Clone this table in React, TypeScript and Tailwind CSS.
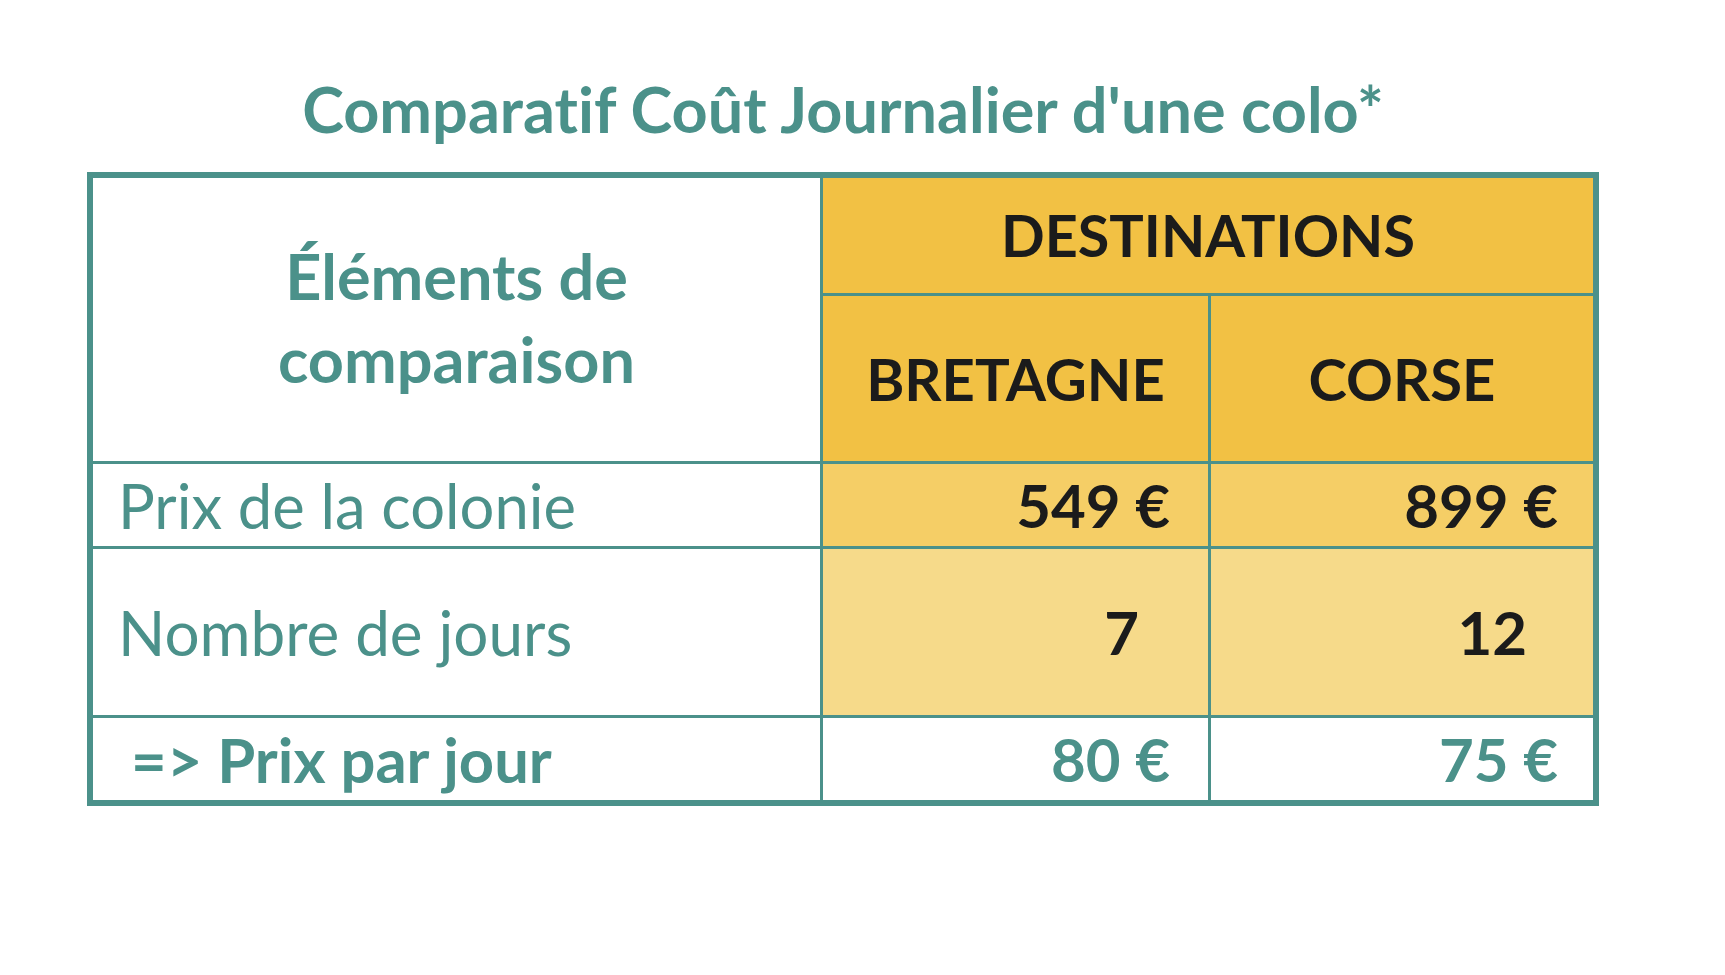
import React from 'react';

const teal = 'text-[#4b918a]';

const App: React.FC = () => {
  return (
    <div className="min-h-screen w-full bg-white font-['Lato',sans-serif] [font-variant-ligatures:none]">
      <div className="ml-[87px] w-fit pt-[73px]">
        {/* Title */}
        <h1 className={`text-center text-[63px] font-bold leading-[72px] ${teal} mb-[27px]`}>
          Comparatif Coût Journalier d'une colo*
        </h1>

        {/* Comparison table */}
        <div className="grid w-fit grid-cols-[727px_385px_382px] grid-rows-[115px_165px_82px_166px_82px] gap-[3px] border-[6px] border-[#4b918a] bg-[#4b918a]">
          <div className={`row-span-2 flex items-center justify-center bg-white pb-[6px] text-center text-[63px] font-bold leading-[83px] ${teal}`}>
            <span>
              Éléments de
              <br />
              comparaison
            </span>
          </div>
          <div className="col-span-2 flex items-center justify-center bg-[#f2c144] text-[57.5px] font-bold text-[#1b1b1b]">
            DESTINATIONS
          </div>
          <div className="flex items-center justify-center bg-[#f2c144] text-[58px] font-bold text-[#1b1b1b]">
            BRETAGNE
          </div>
          <div className="flex items-center justify-center bg-[#f2c144] text-[58px] font-bold text-[#1b1b1b]">
            CORSE
          </div>

          {/* Prix de la colonie */}
          <div className={`flex items-center bg-white pl-[25px] text-[61.5px] ${teal}`}>Prix de la colonie</div>
          <div className="flex items-center justify-end bg-[#f5ce66] pr-[38px] text-[60px] font-bold text-[#1b1b1b]">549 €</div>
          <div className="flex items-center justify-end bg-[#f5ce66] pr-[35px] text-[60px] font-bold text-[#1b1b1b]">899 €</div>

          {/* Nombre de jours */}
          <div className={`flex items-center bg-white pl-[25px] text-[62px] ${teal}`}>Nombre de jours</div>
          <div className="flex items-center justify-end bg-[#f6da8a] pr-[69px] text-[60px] font-bold text-[#1b1b1b]">7</div>
          <div className="flex items-center justify-end bg-[#f6da8a] pr-[66px] text-[60px] font-bold text-[#1b1b1b]">12</div>

          {/* Prix par jour */}
          <div className={`flex items-center bg-white pl-[38px] text-[61.5px] font-bold ${teal}`}>=&gt; Prix par jour</div>
          <div className={`flex items-center justify-end bg-white pr-[38px] text-[60px] font-bold ${teal}`}>80 €</div>
          <div className={`flex items-center justify-end bg-white pr-[35px] text-[60px] font-bold ${teal}`}>75 €</div>
        </div>
      </div>
    </div>
  );
};

export default App;
